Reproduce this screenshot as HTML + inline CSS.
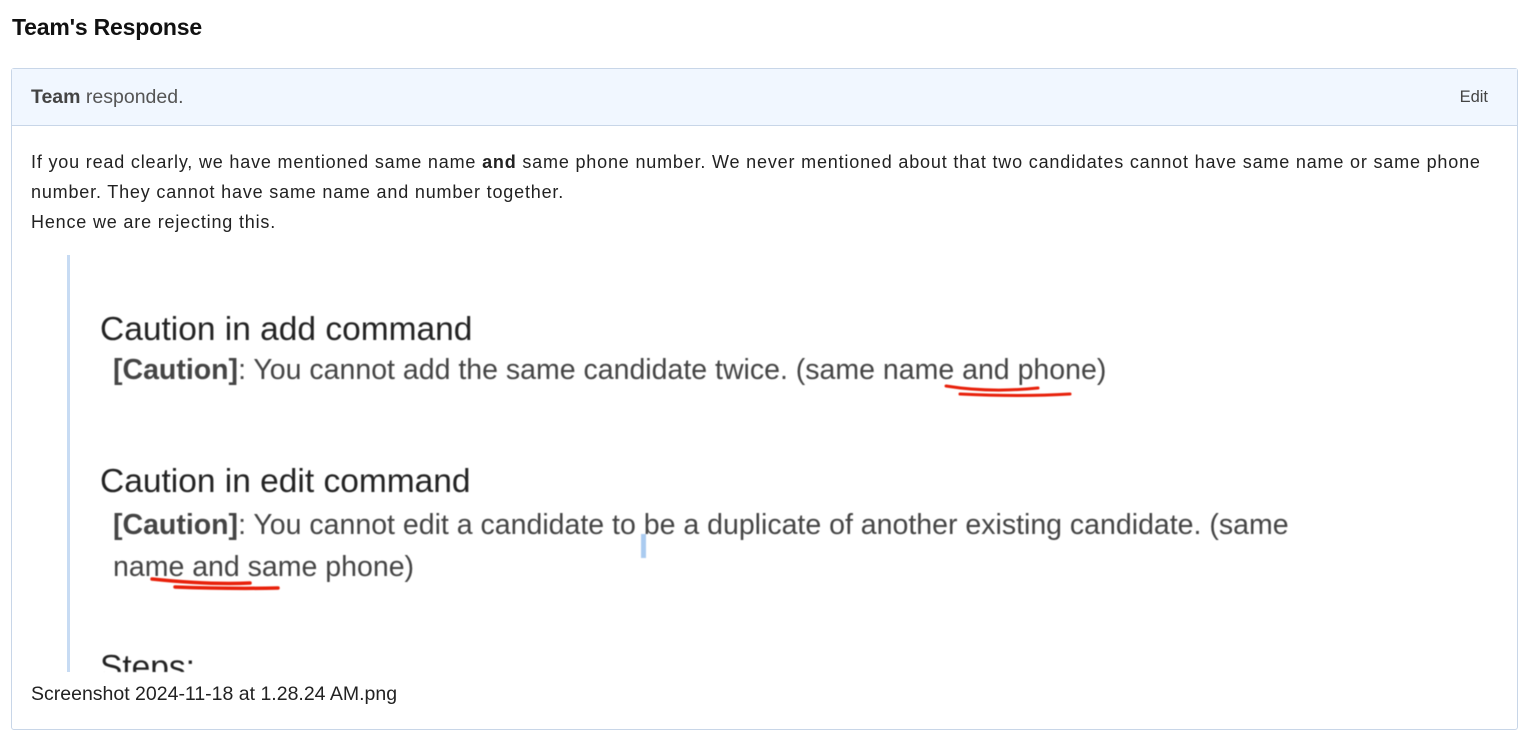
<!DOCTYPE html>
<html><head><style>
body{margin:0;width:1518px;height:716px;overflow:hidden;background:#fff;font-family:"Liberation Sans",sans-serif;position:relative}
.t{position:absolute;left:12px;top:14px;font-size:23px;font-weight:bold;color:#111;letter-spacing:-0.2px}
.card{position:absolute;left:11px;top:68px;width:1505px;height:660px;border:1px solid #c8d6e8;border-radius:3px}
.hd{height:56px;background:#f1f7ff;border-bottom:1px solid #c8d6e8;font-size:19.5px;color:#555;line-height:57px;padding-left:19px;position:relative}
.hd b{color:#444}
.hd span{position:absolute;right:29px;top:0;font-size:16.5px;color:#444}
.bd{position:absolute;left:19px;top:78px;font-size:18px;letter-spacing:0.82px;color:#222;line-height:30px;width:1480px}
.bq{position:absolute;left:55px;top:186px;width:3px;height:417px;background:#c7dbf3}
.img{position:absolute;left:88px;top:186px;width:1300px;height:417px;overflow:hidden;color:#333;filter:blur(0.5px)}
.h{position:absolute;left:0;font-size:33.5px;color:#222}
.p{position:absolute;left:13px;font-size:28.5px;color:#444}
.fn{position:absolute;font-size:19.5px;color:#222}
</style></head><body>
<div class="t">Team's Response</div>
<div class="card">
<div class="hd"><b>Team</b> responded.<span>Edit</span></div>
<div class="bd">If you read clearly, we have mentioned same name <b>and</b> same phone number. We never mentioned about that two candidates cannot have same name or same phone number. They cannot have same name and number together.<br>Hence we are rejecting this.</div>
<div class="bq"></div>
<div class="img">
<div class="h" style="top:56px">Caution in add command</div>
<div class="p" style="top:99px"><b>[Caution]</b>: You cannot add the same candidate twice. (same name and phone)</div>
<svg style="position:absolute;left:0;top:0" width="1300" height="417"><path d="M846 131 Q890 138 938 133 M860 139 Q920 142 970 139" stroke="#e8200a" stroke-width="3" fill="none" stroke-linecap="round"/><path d="M52 324 Q110 330 150 328 M75 332 Q130 334 178 333" stroke="#e8200a" stroke-width="3.5" fill="none" stroke-linecap="round"/><rect x="541" y="279" width="5" height="24" fill="#aacbf0"/></svg>
<div class="h" style="top:208px">Caution in edit command</div>
<div class="p" style="top:254px"><b>[Caution]</b>: You cannot edit a candidate to be a duplicate of another existing candidate. (same</div>
<div class="p" style="top:296px">name and same phone)</div>
<div class="h" style="top:394px">Steps:</div>
</div>
<div class="fn" style="left:19px;top:614px">Screenshot 2024-11-18 at 1.28.24 AM.png</div>
</div>
</body></html>
